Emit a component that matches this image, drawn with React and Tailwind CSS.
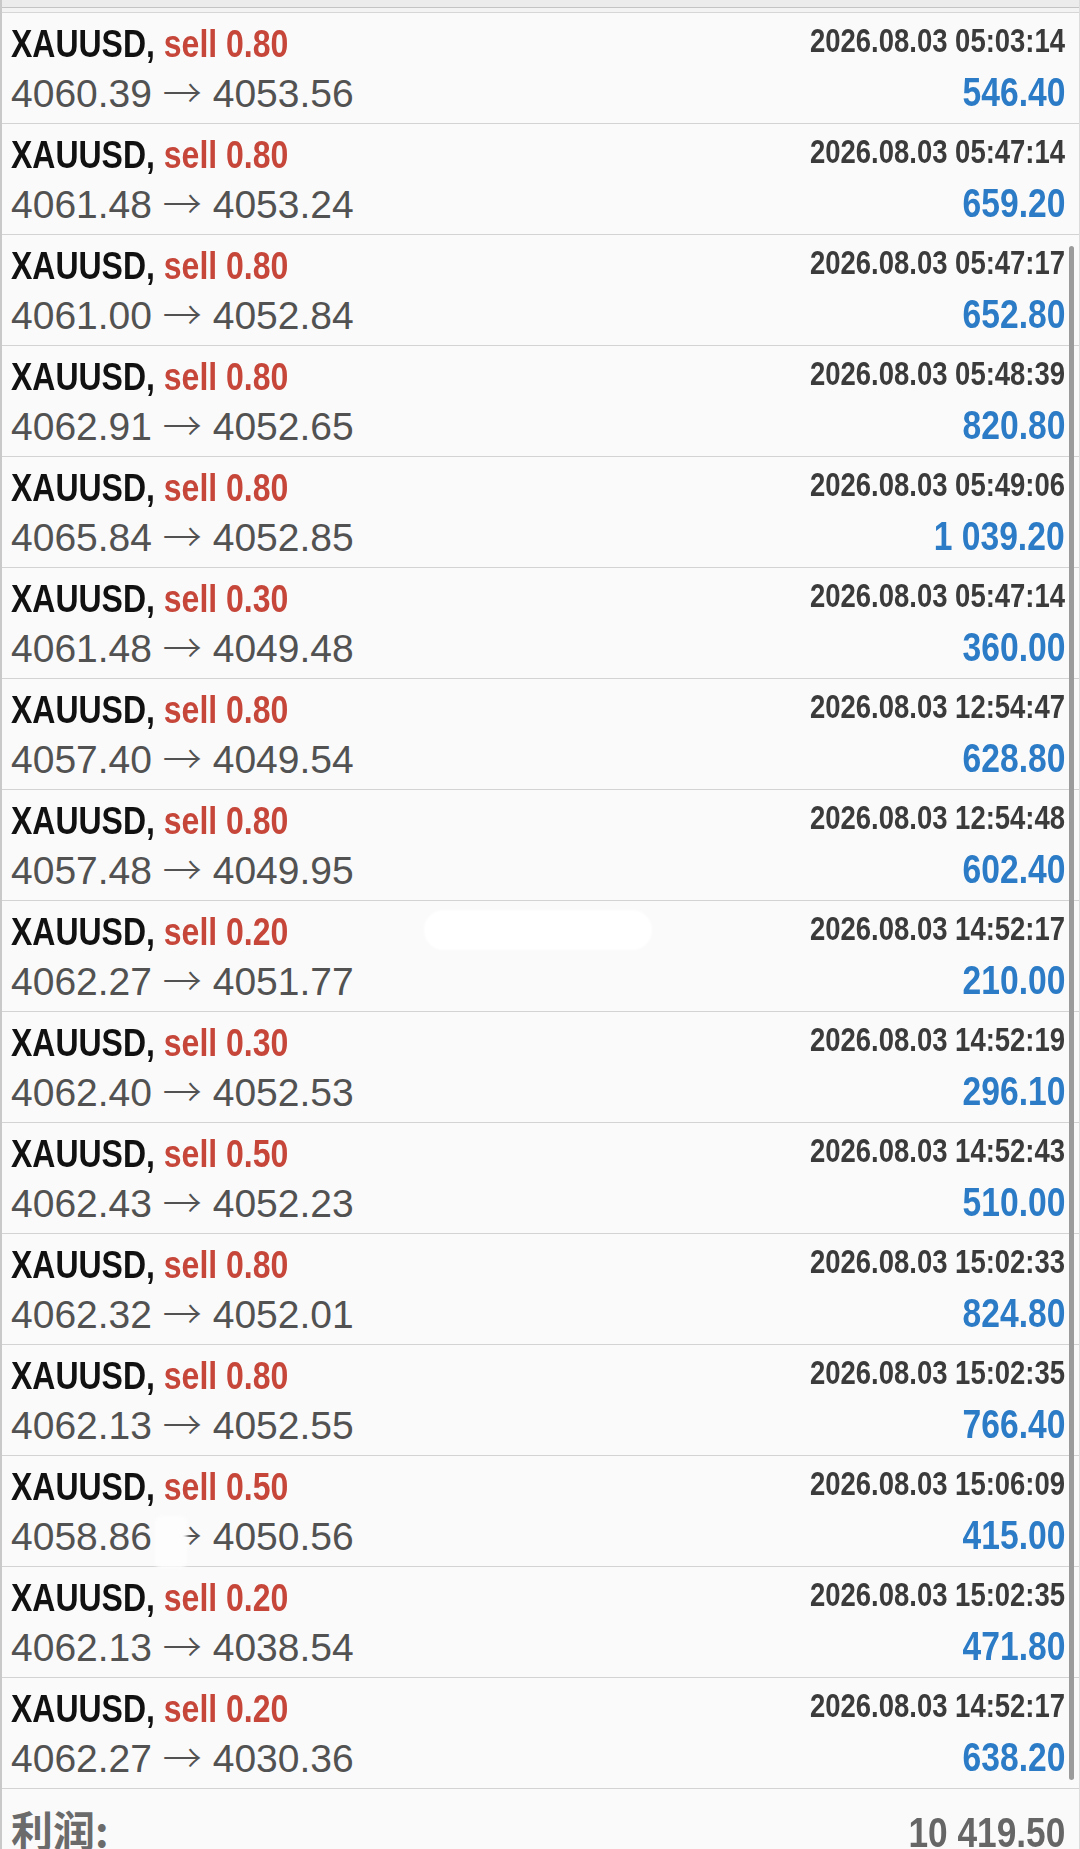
import React from 'react';

const trades = [
  { lot: '0.80', open: '4060.39', close: '4053.56', time: '2026.08.03 05:03:14', profit: '546.40' },
  { lot: '0.80', open: '4061.48', close: '4053.24', time: '2026.08.03 05:47:14', profit: '659.20' },
  { lot: '0.80', open: '4061.00', close: '4052.84', time: '2026.08.03 05:47:17', profit: '652.80' },
  { lot: '0.80', open: '4062.91', close: '4052.65', time: '2026.08.03 05:48:39', profit: '820.80' },
  { lot: '0.80', open: '4065.84', close: '4052.85', time: '2026.08.03 05:49:06', profit: '1 039.20' },
  { lot: '0.30', open: '4061.48', close: '4049.48', time: '2026.08.03 05:47:14', profit: '360.00' },
  { lot: '0.80', open: '4057.40', close: '4049.54', time: '2026.08.03 12:54:47', profit: '628.80' },
  { lot: '0.80', open: '4057.48', close: '4049.95', time: '2026.08.03 12:54:48', profit: '602.40' },
  { lot: '0.20', open: '4062.27', close: '4051.77', time: '2026.08.03 14:52:17', profit: '210.00', blob: true },
  { lot: '0.30', open: '4062.40', close: '4052.53', time: '2026.08.03 14:52:19', profit: '296.10' },
  { lot: '0.50', open: '4062.43', close: '4052.23', time: '2026.08.03 14:52:43', profit: '510.00' },
  { lot: '0.80', open: '4062.32', close: '4052.01', time: '2026.08.03 15:02:33', profit: '824.80' },
  { lot: '0.80', open: '4062.13', close: '4052.55', time: '2026.08.03 15:02:35', profit: '766.40' },
  { lot: '0.50', open: '4058.86', close: '4050.56', time: '2026.08.03 15:06:09', profit: '415.00', smudge: true },
  { lot: '0.20', open: '4062.13', close: '4038.54', time: '2026.08.03 15:02:35', profit: '471.80' },
  { lot: '0.20', open: '4062.27', close: '4030.36', time: '2026.08.03 14:52:17', profit: '638.20' },
];

// condensed bold look: Arial-width bold squeezed like Arial Narrow
const narrow = "inline-block whitespace-nowrap font-['Liberation_Sans',Arial,sans-serif] font-bold scale-x-[0.82]";

function TradeRow({ t }) {
  return (
    <div className="relative flex justify-between h-[111px] border-b border-[#d3d3d3] pl-[9px] pr-[14px]">
      <div className="flex flex-col items-start pt-[9px]">
        <div className={`${narrow} origin-left text-[39px] leading-[44px]`}>
          <span className="text-[#111]">XAUUSD, </span>
          <span className="text-[#c6463a]">sell {t.lot}</span>
        </div>
        <div className="mt-[6px] h-[44px] whitespace-nowrap font-['Liberation_Sans',Arial,sans-serif] text-[39px] leading-[44px] text-[#525252]">
          {t.open} <span className="font-['Noto_Sans_CJK_SC',sans-serif] font-light leading-[0]">→</span> {t.close}
        </div>
      </div>
      <div className="flex flex-col items-end pt-[8px]">
        <div className={`${narrow} origin-right text-[33.5px] leading-[40px] text-[#3b3b3b]`}>{t.time}</div>
        <div className={`${narrow} origin-right mt-[9px] text-[41px] leading-[44px] text-[#2b7bc6]`}>{t.profit}</div>
      </div>
      {t.blob && (
        <div className="absolute left-[422px] top-[9px] w-[228px] h-[40px] rounded-[20px] bg-white blur-[1px]" />
      )}
      {t.smudge && (
        <div className="absolute left-[153px] top-[60px] w-[32px] h-[52px] rounded-[6px] bg-[#fdfdfd] blur-[2px]" />
      )}
    </div>
  );
}

export default function App() {
  return (
    <div className="relative w-[1080px] h-[1849px] overflow-hidden bg-[#fafafa] border-l-2 border-r border-l-[#c9c9c9] border-r-[#dcdcdc]">
      <div className="h-[7px] bg-[#ececec]" />
      <div className="h-px bg-[#c4c4c4]" />
      <div className="h-[4px] bg-[#f3f3f3]" />
      <div className="h-px bg-[#d6d6d6]" />
      {trades.map((t, i) => (
        <TradeRow key={i} t={t} />
      ))}
      <div className="flex justify-between items-baseline pl-[9px] pr-[14px] pt-[16px]">
        <div className="font-['Noto_Sans_CJK_SC',sans-serif] font-bold text-[42px] leading-[48px] text-[#6b6b6b]">利润:</div>
        <div className={`${narrow} origin-right text-[43px] leading-[48px] text-[#666]`}>10 419.50</div>
      </div>
      <div className="absolute left-[1067px] top-[246px] w-[5px] h-[1534px] rounded-full bg-[#9b9b9b]" />
    </div>
  );
}
